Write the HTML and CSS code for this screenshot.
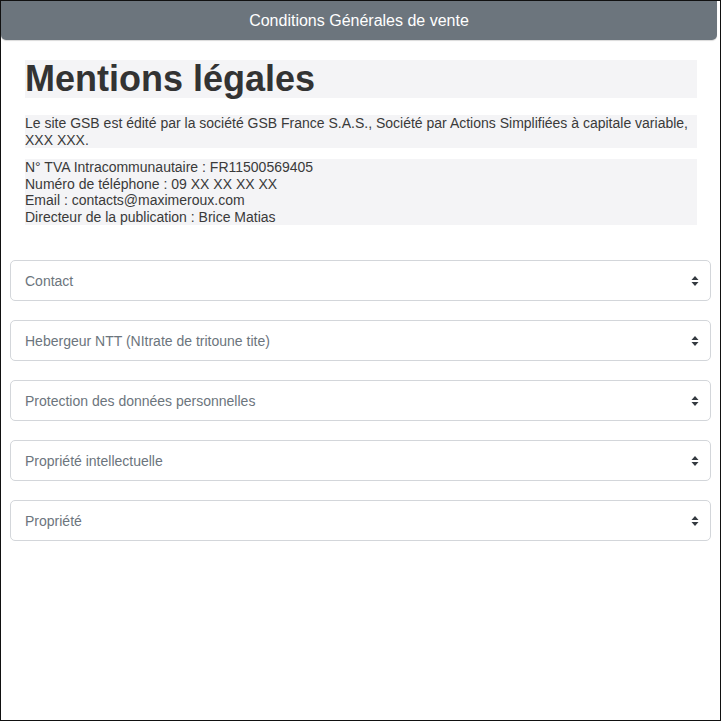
FILE: index.html
```html
<!DOCTYPE html>
<html lang="fr">
<head>
<meta charset="utf-8">
<link rel="stylesheet" href="styles.css">
</head>
<body>
<div class="frame">
  <header class="topbar">Conditions Générales de vente</header>
  <section class="legal">
    <h1 class="title">Mentions légales</h1>
    <p class="block">Le site GSB est édité par la société GSB France S.A.S., Société par Actions Simplifiées à capitale variable, XXX XXX.</p>
    <p class="block">N° TVA Intracommunautaire : FR11500569405<br>Numéro de téléphone : 09 XX XX XX XX<br>Email : contacts@maximeroux.com<br>Directeur de la publication : Brice Matias</p>
  </section>
  <div class="selects">
    <div class="select"><span>Contact</span><svg class="arrow" width="8" height="10" viewBox="0 0 8 10"><path d="M4 0 L7.5 4 H0.5 Z M4 10 L7.5 6 H0.5 Z" fill="#343a40"/></svg></div>
    <div class="select"><span>Hebergeur NTT (NItrate de tritoune tite)</span><svg class="arrow" width="8" height="10" viewBox="0 0 8 10"><path d="M4 0 L7.5 4 H0.5 Z M4 10 L7.5 6 H0.5 Z" fill="#343a40"/></svg></div>
    <div class="select"><span>Protection des données personnelles</span><svg class="arrow" width="8" height="10" viewBox="0 0 8 10"><path d="M4 0 L7.5 4 H0.5 Z M4 10 L7.5 6 H0.5 Z" fill="#343a40"/></svg></div>
    <div class="select"><span>Propriété intellectuelle</span><svg class="arrow" width="8" height="10" viewBox="0 0 8 10"><path d="M4 0 L7.5 4 H0.5 Z M4 10 L7.5 6 H0.5 Z" fill="#343a40"/></svg></div>
    <div class="select"><span>Propriété</span><svg class="arrow" width="8" height="10" viewBox="0 0 8 10"><path d="M4 0 L7.5 4 H0.5 Z M4 10 L7.5 6 H0.5 Z" fill="#343a40"/></svg></div>
  </div>
</div>
</body>
</html>
```

FILE: styles.css
```css
html, body {
  margin: 0;
  padding: 0;
  background: #fff;
}
.frame {
  box-sizing: border-box;
  width: 721px;
  height: 721px;
  border: 1px solid #111;
  font-family: "Liberation Sans", Arial, sans-serif;
  color: #333;
}
.topbar {
  box-sizing: border-box;
  height: 39px;
  margin-right: 3px;
  background: #6c757d;
  color: #fff;
  font-size: 16px;
  display: flex;
  align-items: center;
  justify-content: center;
  border-radius: 0 0 5px 5px;
  box-shadow: 0 1px 1px rgba(0,0,0,0.15);
}
.legal {
  padding: 20px 23px 0 24px;
}
.title {
  margin: 0;
  height: 38px;
  line-height: 38px;
  background: #f4f4f6;
  font-size: 36px;
  font-weight: bold;
  color: #333;
}
.block {
  margin: 17px 0 0;
  background: #f4f4f6;
  font-size: 14px;
  line-height: 16.5px;
  color: #3a3a3a;
}
.block + .block {
  margin-top: 11px;
}
.selects {
  padding: 35px 9px 0 9px;
  display: flex;
  flex-direction: column;
  gap: 19px;
}
.select {
  box-sizing: border-box;
  height: 41px;
  border: 1px solid #d3d6da;
  border-radius: 5px;
  display: flex;
  align-items: center;
  justify-content: space-between;
  padding: 0 11px 0 14px;
  font-size: 14px;
  color: #6c757d;
}
.arrow {
  display: block;
}
```
